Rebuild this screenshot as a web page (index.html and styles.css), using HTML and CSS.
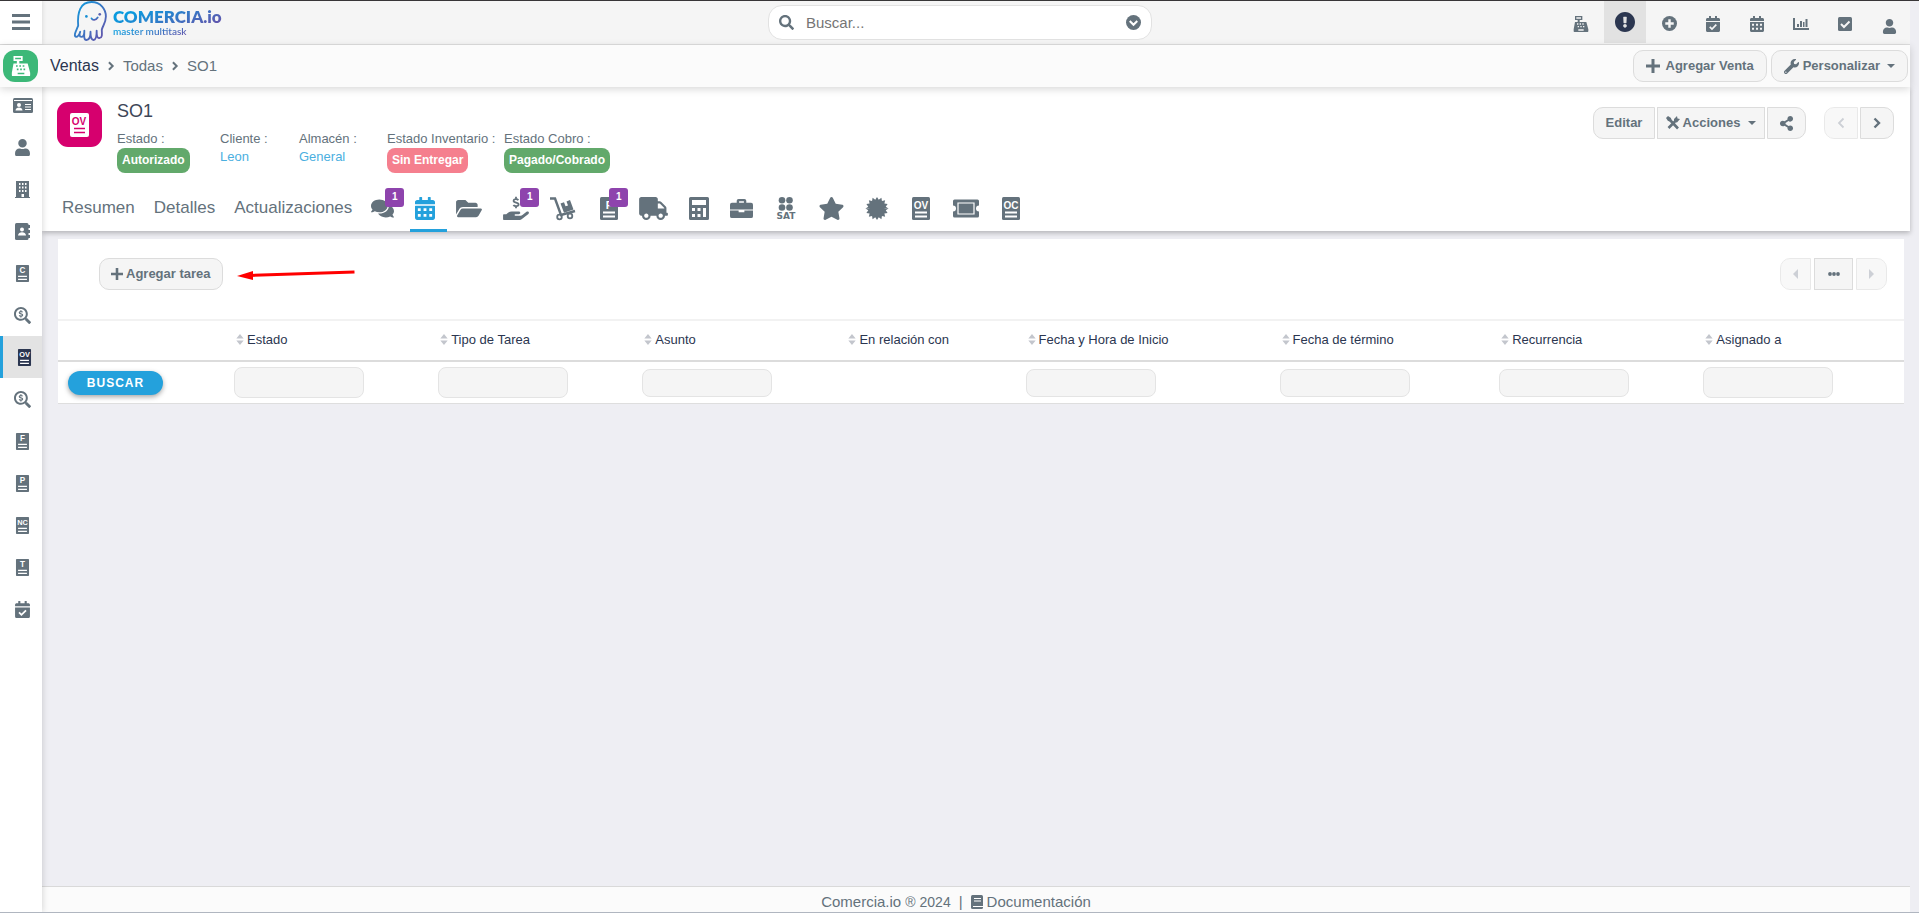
FILE: index.html
```html
<!DOCTYPE html>
<html lang="es">
<head>
<meta charset="utf-8">
<title>SO1 - Ventas</title>
<link rel="stylesheet" href="styles.css">
</head>
<body>
<svg class="defs" aria-hidden="true">
  <defs>
    <linearGradient id="brand" x1="0" y1="0" x2="1" y2="1"><stop offset="0" stop-color="#0a9fe0"/><stop offset="1" stop-color="#6a4fa8"/></linearGradient>
    <symbol id="user" viewBox="0 0 448 512"><path d="M224 256c70.7 0 128-57.3 128-128S294.700 0 224 0 96 57.300 96 128s57.300 128 128 128zm89.600 32h-16.700c-22.200 10.200-46.900 16-72.900 16s-50.600-5.800-72.900-16h-16.700C60.200 288 0 348.200 0 422.400V464c0 26.500 21.500 48 48 48h352c26.500 0 48-21.500 48-48v-41.600c0-74.200-60.200-134.400-134.400-134.400z"/></symbol>
    <symbol id="search" viewBox="0 0 512 512"><path d="M505 442.700L405.300 343c-4.500-4.500-10.600-7-17-7H372c27.600-35.300 44-79.700 44-128C416 93.100 322.900 0 208 0S0 93.100 0 208s93.100 208 208 208c48.300 0 92.700-16.400 128-44v16.300c0 6.400 2.500 12.500 7 17l99.700 99.700c9.400 9.400 24.600 9.400 33.900 0l28.300-28.300c9.400-9.400 9.400-24.600.1-34zM208 336c-70.700 0-128-57.200-128-128 0-70.700 57.200-128 128-128 70.700 0 128 57.200 128 128 0 70.700-57.200 128-128 128z"/></symbol>
    <symbol id="search-usd" viewBox="0 0 512 512"><path d="M505 442.700L405.300 343c-4.500-4.500-10.600-7-17-7H372c27.600-35.300 44-79.700 44-128C416 93.100 322.900 0 208 0S0 93.100 0 208s93.100 208 208 208c48.300 0 92.700-16.400 128-44v16.300c0 6.400 2.500 12.500 7 17l99.700 99.700c9.400 9.400 24.600 9.400 33.900 0l28.300-28.300c9.400-9.400 9.400-24.600.1-34zM208 356c-82 0-148-66-148-148S126 60 208 60s148 66 148 148-66 148-148 148z"/><path class="line" stroke-width="38" d="M258 158c-18-26-98-26-98 12 0 46 100 24 100 70 0 40-84 40-102 10M208 100v40m0 136v40"/></symbol>
    <symbol id="calendar-check" viewBox="0 0 448 512"><path d="M436 160H12c-6.600 0-12-5.400-12-12v-36c0-26.500 21.500-48 48-48h48V12c0-6.600 5.400-12 12-12h40c6.600 0 12 5.400 12 12v52h128V12c0-6.600 5.400-12 12-12h40c6.600 0 12 5.400 12 12v52h48c26.500 0 48 21.500 48 48v36c0 6.600-5.400 12-12 12zM12 192h424c6.600 0 12 5.400 12 12v260c0 26.500-21.500 48-48 48H48c-26.500 0-48-21.500-48-48V204c0-6.600 5.400-12 12-12z"/><path class="cut" stroke-width="54" d="M120 345l72 72 138-138"/></symbol>
    <symbol id="calendar" viewBox="0 0 448 512"><path fill-rule="evenodd" d="M436 160H12c-6.600 0-12-5.400-12-12v-36c0-26.500 21.500-48 48-48h48V12c0-6.600 5.400-12 12-12h40c6.600 0 12 5.400 12 12v52h128V12c0-6.600 5.400-12 12-12h40c6.600 0 12 5.400 12 12v52h48c26.500 0 48 21.500 48 48v36c0 6.600-5.400 12-12 12zM12 192h424c6.600 0 12 5.400 12 12v260c0 26.500-21.500 48-48 48H48c-26.500 0-48-21.500-48-48V204c0-6.600 5.400-12 12-12zM64 250v64h64v-64zm128 0v64h64v-64zm128 0v64h64v-64zM64 378v64h64v-64zm128 0v64h64v-64zm128 0v64h64v-64z"/></symbol>
    <symbol id="register" viewBox="0 0 24 24"><path fill-rule="evenodd" d="M3 0h11v6h-4v3h10l3 11v3a1 1 0 0 1-1 1H2a1 1 0 0 1-1-1v-3L3 9h4V6H3zm2 2v2h7V2zM6 11v2h2v-2zm4 0v2h2v-2zm4 0v2h2v-2zM7 15v2h2v-2zm4 0v2h2v-2zm4 0v2h2v-2zM8 20v2h8v-2z"/></symbol>
    <symbol id="plus" viewBox="0 0 14 14"><path d="M5.500 0h3v5.500H14v3H8.500V14h-3V8.500H0v-3h5.500z"/></symbol>
    <symbol id="right" viewBox="0 0 8 12"><path class="line" stroke-width="2.400" d="M1.500 1.500L6 6l-4.500 4.500"/></symbol>
    <symbol id="caret" viewBox="0 0 8 4"><path d="M0 0h8L4 4z"/></symbol>
    <symbol id="sort" viewBox="0 0 8 12"><path d="M4 0l4 5H0zM4 12L0 7h8z"/></symbol>
    <symbol id="doc" viewBox="0 0 18 23"><rect width="18" height="23" rx="1.500"/><path class="cut" stroke-width="1.800" d="M3 15.500h12M3 19.500h12"/></symbol>
    <symbol id="burst" viewBox="-12 -12 24 24" overflow="visible"><path d="M0 0L12 0 9.120 1.810 11.090 4.590 7.730 5.170 8.490 8.490 5.170 7.730 4.590 11.090 1.810 9.120 0 12z"/></symbol>
  </defs>
</svg>

<header class="topbar">
  <button class="menu-btn" aria-label="Menú"><svg class="i18" viewBox="0 0 18 16"><path d="M0 0h18v3H0zM0 6.500h18v3H0zM0 13h18v3H0z"/></svg></button>
  <a class="logo" href="#">
    <svg class="mascot" viewBox="0 0 32 39"><g fill="none" stroke="url(#brand)" stroke-width="1.800" stroke-linecap="round" stroke-linejoin="round"><path d="M4 24C3 11 6 1 17 1c9 0 14 7 14 14 0 6-3 9-4 13 0 3 1 8-2 8-3 1-3-4-3-7 0 4 0 9-3 9s-3-5-3-8c0 4-1 8-4 8s-2-6-2-9c0 4-1 6-3 6s-2-3-1-5c-1 3-2 5-4 5-3-1 0-6 2-11z"/><path d="M17 17c1 2 4 2 6-1"/></g><circle cx="12" cy="15" r="1.300" fill="#178fd5"/><circle cx="25" cy="13" r="1.300" fill="#5a62b3"/></svg>
    <span class="logo-text"><strong>COMERCIA.io</strong><small>master multitask</small></span>
  </a>
  <form class="search">
    <svg class="i15"><use href="#search"/></svg>
    <input type="text" placeholder="Buscar..." aria-label="Buscar">
    <button type="button" aria-label="Opciones de búsqueda"><svg class="i15" viewBox="0 0 16 16"><circle cx="8" cy="8" r="8"/><path class="cut" stroke-width="2.200" d="M4 6.500l4 4 4-4"/></svg></button>
  </form>
  <nav class="tools">
    <button aria-label="Punto de venta"><svg class="i16"><use href="#register"/></svg></button>
    <button class="on" aria-label="Avisos"><svg class="i20" viewBox="8 8 496 496"><path d="M504 256c0 137-111 248-248 248S8 393 8 256C8 119 119 8 256 8s248 111 248 248zm-248 50c-25.400 0-46 20.600-46 46s20.600 46 46 46 46-20.600 46-46-20.600-46-46-46zm-43.700-165.300l7.400 136c.4 6.300 5.700 11.300 12 11.300h48.600c6.300 0 11.600-5 12-11.300l7.400-136c.4-6.900-5.100-12.700-12-12.700h-63.400c-6.900 0-12.300 5.800-12 12.700z"/></svg></button>
    <button aria-label="Nuevo"><svg class="i15" viewBox="0 0 16 16"><circle cx="8" cy="8" r="8"/><path class="cut" stroke-width="2.600" d="M8 3.500v9M3.500 8h9"/></svg></button>
    <button aria-label="Tareas"><svg class="i16"><use href="#calendar-check"/></svg></button>
    <button aria-label="Calendario"><svg class="i16"><use href="#calendar"/></svg></button>
    <button aria-label="Reportes"><svg class="i16" viewBox="0 0 16 14"><path d="M0 1h2v10h14v2H0zM4 7h2v3H4zM7 4h2v6H7zM10 5h1.500v5H10zM12.500 2h2v8h-2z"/></svg></button>
    <button aria-label="Pendientes"><svg class="i14" viewBox="0 0 14 14"><rect width="14" height="14" rx="1.500"/><path class="cut" stroke-width="2" d="M3 7l3 3 5.500-5.500"/></svg></button>
    <button class="profile" aria-label="Perfil"><svg class="i15"><use href="#user"/></svg></button>
  </nav>
</header>

<div class="crumbbar">
  <span class="app-icon"><svg class="i20"><use href="#register"/></svg></span>
  <nav class="crumbs"><a class="root" href="#">Ventas</a><svg class="sep"><use href="#right"/></svg><a href="#">Todas</a><svg class="sep"><use href="#right"/></svg><span>SO1</span></nav>
  <button class="btn add"><svg class="i14"><use href="#plus"/></svg>Agregar Venta</button>
  <button class="btn custom"><svg class="i15" viewBox="0 0 512 512"><path d="M507.700 109.100c-2.200-9-13.500-12.100-20.100-5.500l-74.400 74.400-67.900-11.300-11.300-67.900 74.400-74.400c6.600-6.600 3.400-17.900-5.700-20.200-47.400-11.700-99.500.9-136.600 37.900-39.600 39.700-50.500 97.100-34 147.200L18.700 402.800c-25 25-25 65.500 0 90.500s65.500 25 90.500 0l213.200-213.200c50.100 16.700 107.500 5.700 147.400-34.200 37.100-37.100 49.700-89.400 37.900-136.800zM64 472c-13.200 0-24-10.700-24-24s10.700-24 24-24 24 10.700 24 24-10.700 24-24 24z"/></svg>Personalizar<svg class="caret"><use href="#caret"/></svg></button>
</div>

<div class="layout">
  <nav class="sidebar">
    <a href="#" aria-label="Cuentas"><svg class="i19" viewBox="0 0 20 15"><rect width="20" height="15" rx="1.500"/><path class="cut" stroke-width="1" d="M1 2.500h18M12 6.500h6M12 9h6M12 11.500h6"/><circle class="hole" cx="6" cy="7" r="2"/><path class="hole" d="M2.500 12.500c0-4 7-4 7 0z"/></svg></a>
    <a href="#" aria-label="Contactos"><svg class="i17"><use href="#user"/></svg></a>
    <a href="#" aria-label="Empresas"><svg class="i17" viewBox="0 0 15 17"><path fill-rule="evenodd" d="M1 0h13v16h1v1H0v-1h1zM4 2v2h1.500V2zm3 0v2h1.500V2zm3 0v2h1.500V2zM4 5.500v2h1.500v-2zm3 0v2h1.500v-2zm3 0v2h1.500v-2zM4 9v2h1.500V9zm3 0v2h1.500V9zm3 0v2h1.500V9zM6.500 13v3h2.500v-3z"/></svg></a>
    <a href="#" aria-label="Agenda"><svg class="i17" viewBox="0 0 15 17"><rect width="13.500" height="17" rx="1.500"/><path d="M13 2h2v3h-2zM13 7h2v3h-2zM13 12h2v3h-2z"/><circle class="hole" cx="7" cy="6.500" r="2"/><path class="hole" d="M3 12.500c0-4.500 8-4.500 8 0z"/></svg></a>
    <a href="#" aria-label="Cotizaciones"><svg class="i17" viewBox="0 0 18 23"><use href="#doc" width="18" height="23"/><text x="9" y="11">C</text></svg></a>
    <a href="#" aria-label="Oportunidades"><svg class="i17"><use href="#search-usd"/></svg></a>
    <a href="#" class="on" aria-label="Ventas"><svg class="i17" viewBox="0 0 18 23"><use href="#doc" width="18" height="23"/><text class="two" x="9" y="11">OV</text></svg></a>
    <a href="#" aria-label="Búsquedas"><svg class="i17"><use href="#search-usd"/></svg></a>
    <a href="#" aria-label="Facturas"><svg class="i17" viewBox="0 0 18 23"><use href="#doc" width="18" height="23"/><text x="9" y="11">F</text></svg></a>
    <a href="#" aria-label="Pagos"><svg class="i17" viewBox="0 0 18 23"><use href="#doc" width="18" height="23"/><text x="9" y="11">P</text></svg></a>
    <a href="#" aria-label="Notas de crédito"><svg class="i17" viewBox="0 0 18 23"><use href="#doc" width="18" height="23"/><text class="two" x="9" y="11">NC</text></svg></a>
    <a href="#" aria-label="Traslados"><svg class="i17" viewBox="0 0 18 23"><use href="#doc" width="18" height="23"/><text x="9" y="11">T</text></svg></a>
    <a href="#" aria-label="Tareas"><svg class="i17"><use href="#calendar-check"/></svg></a>
  </nav>

  <div class="page">
    <section class="record">
      <div class="record-top">
        <span class="record-icon"><svg viewBox="0 0 19 24"><rect width="19" height="24" rx="2"/><path class="cut" stroke-width="1.400" d="M4 15.500h11M4 19.500h11"/><text x="9" y="12">OV</text></svg></span>
        <div class="summary">
          <h1>SO1</h1>
          <dl class="fields">
            <div><dt>Estado :</dt><dd><span class="pill green">Autorizado</span></dd></div>
            <div><dt>Cliente :</dt><dd><a href="#">Leon</a></dd></div>
            <div><dt>Almacén :</dt><dd><a href="#">General</a></dd></div>
            <div><dt>Estado Inventario :</dt><dd><span class="pill red">Sin Entregar</span></dd></div>
            <div><dt>Estado Cobro :</dt><dd><span class="pill green">Pagado/Cobrado</span></dd></div>
          </dl>
        </div>
        <div class="actions">
          <button class="btn first">Editar</button>
          <button class="btn mid"><svg class="i14" viewBox="0 0 14 14"><path class="line" stroke-width="2.600" d="M3.500 3.500l8.500 9M2.500 12L9 5.500"/><path d="M0 2l2-2 3 2 .5 2.500-1 1L2 5zM8 3l3-3 .5 2.500L14 3l-3 3.500L8 6z"/></svg>Acciones<svg class="caret"><use href="#caret"/></svg></button>
          <button class="btn last" aria-label="Compartir"><svg class="i15" viewBox="0 0 448 512"><path d="M352 320c-22.600 0-43.400 7.800-59.800 20.900l-102.500-64a96.500 96.500 0 0 0 0-41.700l102.500-64.100C308.600 184.200 329.400 192 352 192c53 0 96-43 96-96S405 0 352 0s-96 43-96 96c0 7.200.8 14.100 2.300 20.800l-102.500 64.100C139.400 167.800 118.600 160 96 160c-53 0-96 43-96 96s43 96 96 96c22.600 0 43.400-7.800 59.800-20.900l102.500 64.100A96.300 96.300 0 0 0 256 416c0 53 43 96 96 96s96-43 96-96-43-96-96-96z"/></svg></button>
          <button class="btn first prev" disabled aria-label="Anterior"><svg class="chev" viewBox="0 0 8 12"><path class="line" stroke-width="1.800" d="M6.500 1.500L2 6l4.500 4.500"/></svg></button>
          <button class="btn last next" aria-label="Siguiente"><svg class="chev"><use href="#right"/></svg></button>
        </div>
      </div>
      <nav class="tabs">
        <a href="#" class="word">Resumen</a>
        <a href="#" class="word">Detalles</a>
        <a href="#" class="word">Actualizaciones</a>
        <a href="#" aria-label="Comentarios"><svg class="w23" viewBox="0 0 576 512"><path d="M416 192c0-88.400-93.100-160-208-160S0 103.600 0 192c0 34.300 14.100 65.900 38 92-13.400 30.200-35.500 54.200-35.800 54.500-2.200 2.300-2.800 5.700-1.500 8.700S4.800 352 8 352c36.600 0 66.900-12.300 88.700-25 32.200 15.700 70.300 25 111.300 25 114.900 0 208-71.600 208-160zm122 220c23.900-26 38-57.700 38-92 0-66.900-53.500-124.200-129.300-148.100.9 6.600 1.300 13.300 1.300 20.100 0 105.900-107.700 192-240 192-10.800 0-21.300-.8-31.700-1.900C207.800 439.600 281.800 480 368 480c41 0 79.100-9.200 111.300-25 21.800 12.700 52.100 25 88.700 25 3.200 0 6.100-1.900 7.300-4.800 1.300-2.900.7-6.300-1.500-8.700-.3-.3-22.400-24.200-35.800-54.500z"/></svg><b>1</b></a>
        <a href="#" class="on" aria-label="Tareas"><svg class="w20"><use href="#calendar"/></svg></a>
        <a href="#" aria-label="Archivos"><svg class="w26" viewBox="0 0 576 512"><path d="M572.700 292.100l-72.400 124.100A64 64 0 0 1 445 448H45c-18.500 0-30-20.100-20.700-36.100l72.400-124.100A64 64 0 0 1 152 256h400c18.500 0 30 20.100 20.700 36.100zM152 224h328v-48c0-26.500-21.500-48-48-48H272l-64-64H48C21.500 64 0 85.500 0 112v278l69.100-118.400C86.200 242.200 118 224 152 224z"/></svg></a>
        <a href="#" aria-label="Cobros"><svg class="w26" viewBox="0 0 576 512"><path d="M565.300 328.100c-11.800-10.700-30.200-10-42.600 0L430.300 402c-11.300 9.100-25.400 14-40 14H272c-8.800 0-16-7.200-16-16s7.200-16 16-16h78.300c15.900 0 30.700-10.900 33.300-26.600 3.300-20-12.100-37.400-31.600-37.400H192c-27 0-53.100 9.300-74.100 26.300L71.400 384H16c-8.800 0-16 7.200-16 16v96c0 8.800 7.200 16 16 16h356.800c14.500 0 28.600-4.900 40-14L564 377c15.200-12.100 16.400-35.300 1.300-48.900z"/><path class="line" stroke-width="40" d="M340 70c-24-34-106-28-106 14 0 56 112 28 112 84 0 46-92 46-116 10M288-6v36m0 182v36"/></svg><b>1</b></a>
        <a href="#" aria-label="Entregas"><svg class="w26" viewBox="0 0 26 23"><path class="line" stroke-width="2.400" d="M0 1.500h5l6 16.500L25 14"/><circle class="line" cx="9.500" cy="20" r="2.300" stroke-width="1.800"/><circle class="line" cx="20" cy="19" r="2.300" stroke-width="1.800"/><path d="M10.500 6.500l3.500-1.200 1.500 4 2.500-.9-1.500-4L20 3l3.500 9.500-9.500 3.200z"/></svg></a>
        <a href="#" class="shift" aria-label="Facturas"><svg class="w18" viewBox="0 0 18 23"><use href="#doc" width="18" height="23"/><text x="9" y="12">F</text></svg><b>1</b></a>
        <a href="#" aria-label="Envíos"><svg class="w29" viewBox="0 0 640 512"><path d="M624 352h-16V243.900c0-12.700-5.100-24.900-14.100-33.900L494 110.100c-9-9-21.200-14.100-33.900-14.100H416V48c0-26.500-21.500-48-48-48H48C21.500 0 0 21.500 0 48v320c0 26.500 21.500 48 48 48h16c0 53 43 96 96 96s96-43 96-96h128c0 53 43 96 96 96s96-43 96-96h48c8.800 0 16-7.200 16-16v-32c0-8.800-7.200-16-16-16zM160 464c-26.500 0-48-21.500-48-48s21.500-48 48-48 48 21.500 48 48-21.500 48-48 48zm320 0c-26.500 0-48-21.500-48-48s21.500-48 48-48 48 21.500 48 48-21.500 48-48 48zm80-208H416V144h44.100l99.900 99.900V256z"/></svg></a>
        <a href="#" aria-label="Cálculos"><svg class="w20" viewBox="0 0 20 23"><path fill-rule="evenodd" d="M1.500 0h17A1.500 1.500 0 0 1 20 1.500v20a1.500 1.500 0 0 1-1.500 1.500h-17A1.500 1.500 0 0 1 0 21.500v-20A1.500 1.500 0 0 1 1.500 0zM3 3v5h14V3zm0 8v3h3v-3zm5.500 0v3h3v-3zm5.500 0v9h3v-9zM3 17v3h3v-3zm5.500 0v3h3v-3z"/></svg></a>
        <a href="#" aria-label="Proyectos"><svg class="w23" viewBox="0 0 24 20"><path fill-rule="evenodd" d="M9 0h6a2 2 0 0 1 2 2v2h5a2 2 0 0 1 2 2v5H0V6a2 2 0 0 1 2-2h5V2a2 2 0 0 1 2-2zm.5 2.500V4h5V2.500zM0 12h9v2h6v-2h9v6a2 2 0 0 1-2 2H2a2 2 0 0 1-2-2z"/></svg></a>
        <a href="#" aria-label="SAT"><svg class="w24 sat" viewBox="0 0 24 23"><circle cx="8" cy="3.300" r="3.300"/><circle cx="15.500" cy="3.300" r="3.300"/><circle cx="8" cy="10.500" r="3.300"/><circle cx="15.500" cy="10.500" r="3.300"/><text x="12" y="22">SAT</text></svg></a>
        <a href="#" aria-label="Favoritos"><svg class="w25" viewBox="18 0 540 512"><path d="M259.300 17.800L194 150.200 47.900 171.500c-26.200 3.800-36.700 36.100-17.700 54.600l105.700 103-25 145.500c-4.500 26.300 23.200 46 46.400 33.700L288 439.600l130.700 68.700c23.200 12.200 50.900-7.400 46.400-33.700l-25-145.500 105.700-103c19-18.500 8.500-50.800-17.700-54.600L382 150.200 316.700 17.800c-11.700-23.600-45.600-23.900-57.400 0z"/></svg></a>
        <a href="#" class="wide" aria-label="Certificados"><svg class="w24" viewBox="-12 -12 24 24"><circle r="8"/><use href="#burst" x="-12" y="-12" width="24" height="24"/><use href="#burst" x="-12" y="-12" width="24" height="24" transform="rotate(90)"/><use href="#burst" x="-12" y="-12" width="24" height="24" transform="rotate(180)"/><use href="#burst" x="-12" y="-12" width="24" height="24" transform="rotate(270)"/></svg></a>
        <a href="#" class="wide" aria-label="Ventas"><svg class="w18" viewBox="0 0 18 23"><use href="#doc" width="18" height="23"/><text class="two" x="9" y="12">OV</text></svg></a>
        <a href="#" class="wide" aria-label="Vales"><svg class="w26" viewBox="0 0 26 18"><path d="M1.500 0h23A1.500 1.500 0 0 1 26 1.500V6a3 3 0 0 0 0 6v4.500a1.500 1.500 0 0 1-1.500 1.500h-23A1.500 1.500 0 0 1 0 16.500V12a3 3 0 0 0 0-6V1.500A1.500 1.500 0 0 1 1.500 0z"/><path class="cut" stroke-width="1.200" d="M5 3.500h16v11H5z"/></svg></a>
        <a href="#" aria-label="Compras"><svg class="w18" viewBox="0 0 18 23"><use href="#doc" width="18" height="23"/><text class="two" x="9" y="12">OC</text></svg></a>
      </nav>
    </section>

    <main class="panel">
      <div class="panel-bar">
        <button class="btn task"><svg class="i12"><use href="#plus"/></svg>Agregar tarea</button>
        <svg class="arrow" viewBox="0 0 118 12"><path d="M12 7.500L117.500 4" stroke="#f00" stroke-width="3" fill="none"/><path d="M0 8l16-5v9z" fill="#f00"/></svg>
        <div class="pager">
          <button class="btn first" disabled aria-label="Página anterior"><svg class="tri" viewBox="0 0 5 10"><path d="M5 0v10L0 5z"/></svg></button>
          <button class="btn mid" aria-label="Páginas"><svg class="dots" viewBox="0 0 12 4"><circle cx="2" cy="2" r="1.900"/><circle cx="6" cy="2" r="1.900"/><circle cx="10" cy="2" r="1.900"/></svg></button>
          <button class="btn last" disabled aria-label="Página siguiente"><svg class="tri" viewBox="0 0 5 10"><path d="M0 0v10l5-5z"/></svg></button>
        </div>
      </div>
      <table>
        <colgroup><col class="c-act"><col class="c-std"><col class="c-std"><col class="c-std"><col class="c-rel"><col class="c-start"><col class="c-end"><col class="c-std"><col></colgroup>
        <thead><tr>
          <th></th>
          <th><svg><use href="#sort"/></svg>Estado</th>
          <th><svg><use href="#sort"/></svg>Tipo de Tarea</th>
          <th><svg><use href="#sort"/></svg>Asunto</th>
          <th><svg><use href="#sort"/></svg>En relación con</th>
          <th><svg><use href="#sort"/></svg>Fecha y Hora de Inicio</th>
          <th><svg><use href="#sort"/></svg>Fecha de término</th>
          <th><svg><use href="#sort"/></svg>Recurrencia</th>
          <th><svg><use href="#sort"/></svg>Asignado a</th>
        </tr></thead>
        <tbody><tr>
          <td><button class="find">BUSCAR</button></td>
          <td><input class="tall" type="text" aria-label="Estado"></td>
          <td><input class="tall" type="text" aria-label="Tipo de Tarea"></td>
          <td><input type="text" aria-label="Asunto"></td>
          <td></td>
          <td><input type="text" aria-label="Fecha y Hora de Inicio"></td>
          <td><input type="text" aria-label="Fecha de término"></td>
          <td><input type="text" aria-label="Recurrencia"></td>
          <td><input class="tall" type="text" aria-label="Asignado a"></td>
        </tr></tbody>
      </table>
    </main>

    <footer><span>Comercia.io <small>® 2024</small></span><span>|</span><a href="#"><svg class="i13" viewBox="0 0 12 14"><rect width="12" height="14" rx="1.500"/><path class="cut" stroke-width="1" d="M3 3.500h7M3 6h7M2 11.500h10"/></svg>Documentación</a></footer>
  </div>
</div>
</body>
</html>
```
FILE: styles.css
```css
* { box-sizing: border-box; }
body {
  --ink: #64727c;
  --dark: #2b3650;
  margin: 0;
  padding-right: 9px;
  min-height: 100vh;
  display: flex;
  flex-direction: column;
  border-top: 1px solid #383638;
  border-bottom: 1px solid #b0b6c0;
  background: #eeeef3;
  color: var(--ink);
  font: 13px/16px "Liberation Sans", Arial, sans-serif;
}
a { color: inherit; text-decoration: none; }
button { font: inherit; color: inherit; border: 0; padding: 0; background: none; cursor: pointer; }
svg { fill: currentColor; display: block; flex: none; overflow: visible; }
.defs { position: absolute; width: 0; height: 0; overflow: hidden; }
.line { fill: none; stroke: currentColor; }
.cut { fill: none; stroke: var(--cut, #fff); }
.hole { fill: var(--cut, #fff); }
svg text { fill: var(--cut, #fff); font: bold 11px "Liberation Sans", Arial, sans-serif; text-anchor: middle; }
svg text.two { font-size: 10px; }
.i12 { width: 12px; height: 12px; }
.i13 { width: 12px; height: 14px; }
.i14 { width: 14px; height: 14px; }
.i15 { width: 15px; height: 15px; }
.i16 { width: 16px; height: 16px; }
.i17 { width: 17px; height: 17px; }
.i18 { width: 18px; height: 16px; }
.i19 { width: 20px; height: 15px; }
.i20 { width: 20px; height: 20px; }
.caret { width: 8px; height: 4px; }

/* Top bar */
.topbar { display: flex; align-items: flex-start; height: 44px; background: #f5f5f5; border-bottom: 1px solid #dfdfdf; --cut: #f5f5f5; }
.menu-btn { width: 42px; height: 43px; padding-bottom: 2px; background: #fff; display: grid; place-items: center; box-shadow: 1px 0 4px rgba(0,0,0,.1); }
.logo { display: flex; gap: 6px; margin-left: 32px; flex: 1; }
.mascot { width: 33px; height: 40px; }
.logo-text { display: flex; flex-direction: column; padding-top: 7px; }
.logo-text strong, .logo-text small { background: linear-gradient(160deg, #0a9ade 20%, #6a4fa8); background-clip: text; color: transparent; width: max-content; }
.logo-text strong { font: 800 17px/18px Lato, sans-serif; }
.logo-text small { font: 600 10px/11px Lato, sans-serif; }
.search { width: 384px; height: 35px; margin: 4px 64px 0 0; display: flex; align-items: center; gap: 8px; padding: 0 10px; background: #fff; border: 1px solid #e2e2e2; border-radius: 14px; --cut: #fff; }
.search input { flex: 1; border: 0; outline: 0; padding: 0 4px; background: none; font: 15px/20px "Liberation Sans", Arial, sans-serif; color: var(--ink); }
.search input::placeholder { color: #757575; opacity: 1; }
.tools { flex: 1; display: flex; justify-content: flex-end; gap: 2px; }
.tools button { width: 42px; height: 42px; display: grid; place-items: center; padding-top: 3px; }
.tools .on { background: #e2e2e2; color: var(--dark); padding-top: 0; }
.tools .profile { padding-top: 8px; }

/* Breadcrumb bar */
.crumbbar { position: relative; z-index: 2; height: 42px; display: flex; align-items: center; gap: 4px; padding: 0 2px 0 3px; background: #fbfbfb; box-shadow: 0 2px 8px rgba(0,0,0,.16); }
.app-icon { width: 35px; height: 32px; border-radius: 12px; background: #3cb878; color: #fff; display: grid; place-items: center; }
.crumbs { flex: 1; display: flex; align-items: center; gap: 8px; margin-left: 8px; font-size: 15px; line-height: 20px; }
.crumbs .root { font-size: 16px; color: var(--dark); }
.sep { width: 8px; height: 10px; }
.btn { height: 32px; display: flex; align-items: center; justify-content: center; gap: 6px; border: 1px solid #dcdcdc; border-radius: 10px; background: #f5f5f5; font-weight: bold; }
.btn:disabled { opacity: .6; color: #adb2bb; }
.btn.first { border-radius: 10px 0 0 10px; }
.btn.mid { border-radius: 0; }
.btn.last { border-radius: 0 10px 10px 0; }
.add { padding: 0 12px; }
.custom { gap: 4px; padding: 0 12px; }
.custom .caret { margin-left: 3px; }

/* Layout */
.layout { flex: 1; display: flex; }
.sidebar { width: 42px; margin-top: -3px; background: #fff; box-shadow: 1px 0 6px rgba(0,0,0,.14); position: relative; z-index: 1; }
.sidebar a { height: 42px; display: grid; place-items: center; padding-left: 3px; }
.sidebar a.on { border-left: 3px solid #24a1dc; background: #e3e3e3; color: var(--dark); }
.page { flex: 1; min-width: 0; display: flex; flex-direction: column; }

/* Record header */
.record { background: #fff; box-shadow: 0 2px 5px rgba(0,0,0,.25); }
.record-top { display: flex; height: 97px; padding: 15px 16px 0 15px; }
.record-icon { width: 45px; height: 45px; border-radius: 11px; background: #d6006e; color: #fff; display: grid; place-items: center; --cut: #d6006e; }
.record-icon svg { width: 19px; height: 24px; }
.record-icon text { font-size: 10px; }
.summary { flex: 1; margin-left: 15px; }
h1 { margin: 0; font-size: 18px; line-height: 18px; font-weight: normal; color: #3d4657; }
.fields { margin: 11px 0 0; display: grid; grid-template-columns: 103px 79px 88px 117px auto; justify-content: start; }
.fields dd { margin: 0; line-height: 20px; }
.fields a { color: #4bafdf; }
.pill { display: inline-block; margin-top: 1px; height: 25px; padding: 0 5px; border-radius: 8px; color: #fff; font-weight: bold; font-size: 12px; line-height: 25px; }
.green { background: #62a96b; }
.red { background: #f57f8e; }
.actions { display: flex; gap: 2px; padding-top: 5px; }
.actions .first { width: 62px; }
.actions .mid { width: 108px; gap: 3px; }
.actions .mid .caret { margin-left: 5px; }
.actions .last { width: 39px; }
.actions .prev { width: 34px; margin-left: 16px; }
.actions .next { width: 34px; }
.chev { width: 8px; height: 12px; }

.tabs { display: flex; gap: 4px; height: 47px; padding-left: 15px; font-size: 17px; line-height: 20px; }
.tabs a { position: relative; display: flex; align-items: center; height: 48px; padding: 3px 12px 0 5px; border-bottom: 3px solid transparent; }
.tabs .on { color: #24a1dc; border-color: #24a1dc; }
.tabs .word { padding-right: 10px; }
.tabs .shift { padding-left: 8px; }
.tabs .wide { padding-right: 14px; }
.tabs svg { height: 23px; }
.tabs b { position: absolute; top: 4px; right: 2px; width: 19px; height: 19px; border-radius: 3px; background: #8e44ad; color: #fff; font: bold 10px/18px "Liberation Sans", Arial, sans-serif; text-align: center; }
.w18 { width: 18px; }
.w20 { width: 20px; }
.w23 { width: 23px; }
.w24 { width: 24px; }
.w25 { width: 25px; }
.w26 { width: 26px; }
.w29 { width: 29px; }
.sat text { fill: currentColor; font: bold 9px "DejaVu Sans", sans-serif; }

/* Task list */
.panel { margin: 8px 6px 0 16px; background: #fff; }
.panel-bar { display: flex; align-items: center; height: 80px; padding: 0 17px 10px 41px; }
.task { gap: 3px; padding: 0 11px; }
.arrow { width: 118px; height: 12px; margin-left: 14px; }
.pager { margin-left: auto; display: flex; gap: 3px; }
.pager .btn { width: 31px; }
.pager .mid { width: 39px; }
.tri { width: 5px; height: 10px; }
.dots { width: 12px; height: 4px; }
table { width: 100%; table-layout: fixed; border-collapse: separate; border-spacing: 0; border-top: 2px solid #f2f2f2; }
.c-act { width: 9.1%; }
.c-std { width: 11.06%; }
.c-rel { width: 9.7%; }
.c-start { width: 13.76%; }
.c-end { width: 11.9%; }
th { height: 41px; padding: 0 10px 2px; border-bottom: 2px solid #dcdcdc; text-align: left; font-weight: normal; color: var(--dark); white-space: nowrap; }
th svg { display: inline-block; width: 8px; height: 11px; margin-right: 3px; color: #c3c6cd; vertical-align: -1px; }
td { height: 42px; padding: 0 8px; border-bottom: 1px solid #dedede; }
td input { display: block; width: 130px; height: 28px; border: 1px solid #e4e4e4; border-radius: 8px; background: #f5f5f5; padding: 0 8px; }
td input.tall { height: 31px; }
.find { display: block; width: 95px; height: 24px; margin-left: 2px; border-radius: 12px; background: #24a1dc; color: #fff; font-weight: bold; font-size: 12px; letter-spacing: 1px; box-shadow: 0 2px 5px rgba(0,0,0,.35); }

footer { margin-top: auto; height: 26px; display: flex; justify-content: center; align-items: center; gap: 8px; padding: 4px 40px 0 0; border-top: 1px solid #d9d9d9; background: #fbfbfb; font-size: 15px; line-height: 20px; }
footer small { font-size: 14px; }
footer a { display: flex; align-items: center; gap: 4px; }
```
